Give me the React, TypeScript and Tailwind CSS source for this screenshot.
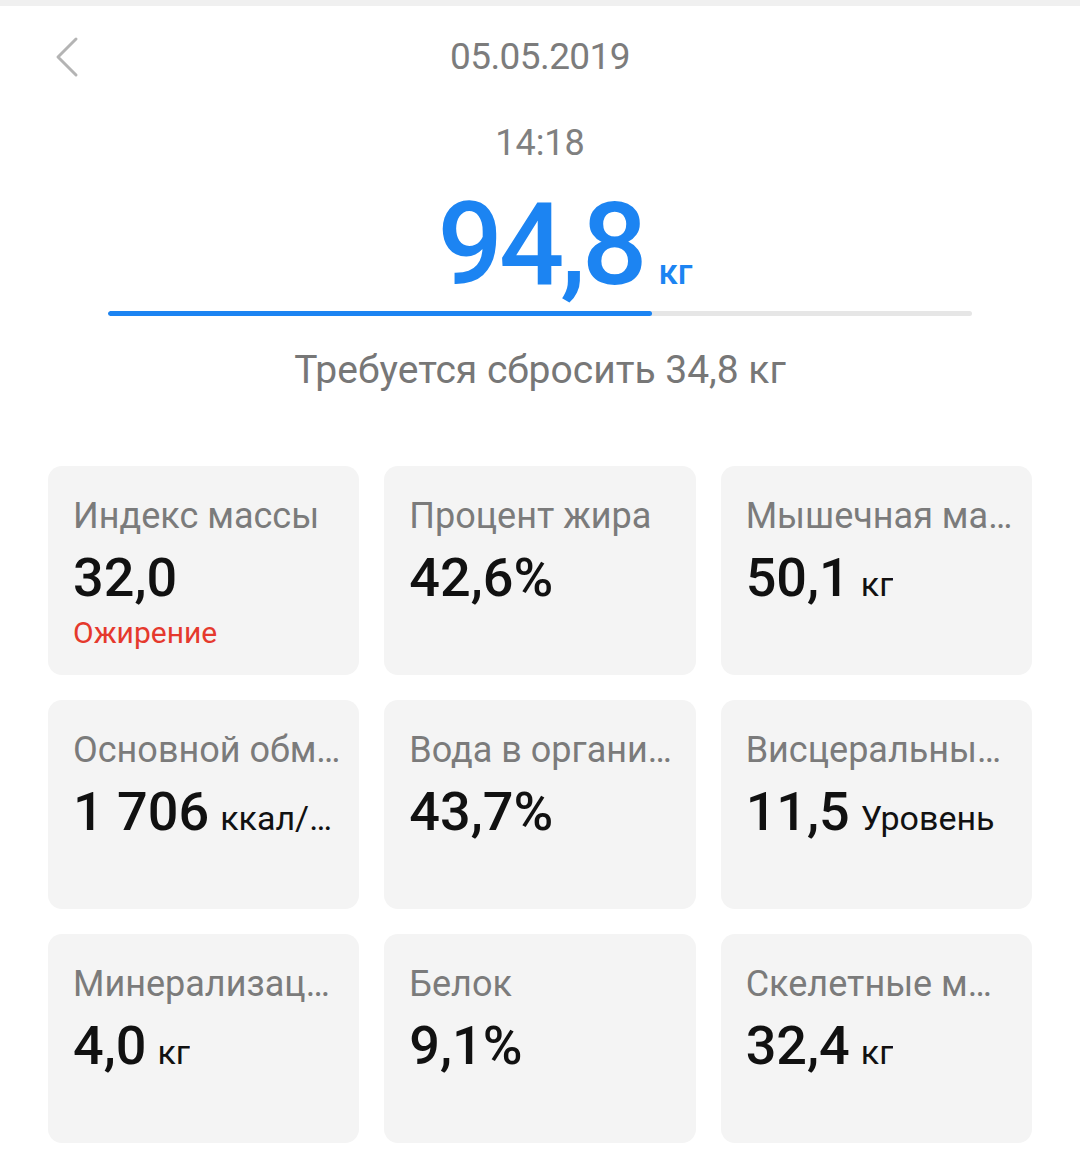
import type { ReactNode } from "react";

type Metric = {
  label: string;
  value: string;
  unit?: string;
  note?: ReactNode;
};

const metrics: Metric[] = [
  { label: "Индекс массы", value: "32,0", note: <span className="text-[#e5392d]">Ожирение</span> },
  { label: "Процент жира", value: "42,6%" },
  { label: "Мышечная масса", value: "50,1", unit: "кг" },
  { label: "Основной обмен", value: "1 706", unit: "ккал/день" },
  { label: "Вода в организме", value: "43,7%" },
  { label: "Висцеральный жир", value: "11,5", unit: "Уровень" },
  { label: "Минерализация костей", value: "4,0", unit: "кг" },
  { label: "Белок", value: "9,1%" },
  { label: "Скелетные мышцы", value: "32,4", unit: "кг" },
];

function MetricCard({ label, value, unit, note }: Metric) {
  return (
    <div className="h-[209px] min-w-0 rounded-[14px] bg-[#f4f4f4] pl-[25px] pr-[17px] pt-[30px]">
      <div className="truncate text-[36px] leading-[40px] text-[#7b7b7b]">{label}</div>
      <div className="mt-[12px] flex min-w-0 items-baseline gap-[11px] leading-[60px]">
        <span className="shrink-0 text-[54px] font-medium text-[#111]">{value}</span>
        {unit && <span className="truncate text-[34px] text-[#111]">{unit}</span>}
      </div>
      {note && <div className="mt-[7px] text-[30px] leading-[36px]">{note}</div>}
    </div>
  );
}

export default function App() {
  const progress = 63;
  return (
    <div className="min-h-[1169px] bg-white font-['Roboto','Noto_Sans',sans-serif]">
      <div className="h-[6px] bg-[#f0f0f0]" />

      {/* header: back chevron + date */}
      <div className="grid h-[102px] grid-cols-[1fr_auto_1fr] items-center">
        <div className="pl-[52px]">
          <svg width="28" height="42" viewBox="0 0 28 42" fill="none">
            <path d="M24 3 L6 21 L24 39" stroke="#b4b4b4" strokeWidth="3" strokeLinecap="round" strokeLinejoin="round" />
          </svg>
        </div>
        <div className="text-[37px] leading-[44px] tracking-[-0.6px] text-[#7c7c7c]">05.05.2019</div>
        <div />
      </div>

      <div className="mt-[15px] text-center text-[36px] leading-[40px] text-[#808080]">14:18</div>

      <div className="mt-[24px] flex items-baseline justify-center gap-[15px] pl-[50px] text-[#1c84f2]">
        <span className="text-[115px] font-medium leading-[115px] tracking-[-4px]">94,8</span>
        <span className="text-[35px] font-medium">кг</span>
      </div>

      <div className="mx-auto mt-[9px] h-[5px] w-[864px] overflow-hidden rounded-full bg-[#e6e6e6]">
        <div className="h-full rounded-full bg-[#1c84f2]" style={{ width: `${progress}%` }} />
      </div>

      <div className="mt-[32px] text-center text-[39px] leading-[44px] text-[#777]">Требуется сбросить 34,8 кг</div>

      <div className="mt-[74px] grid grid-cols-3 gap-[25px] px-[48px]">
        {metrics.map((m) => (
          <MetricCard key={m.label} {...m} />
        ))}
      </div>
    </div>
  );
}
